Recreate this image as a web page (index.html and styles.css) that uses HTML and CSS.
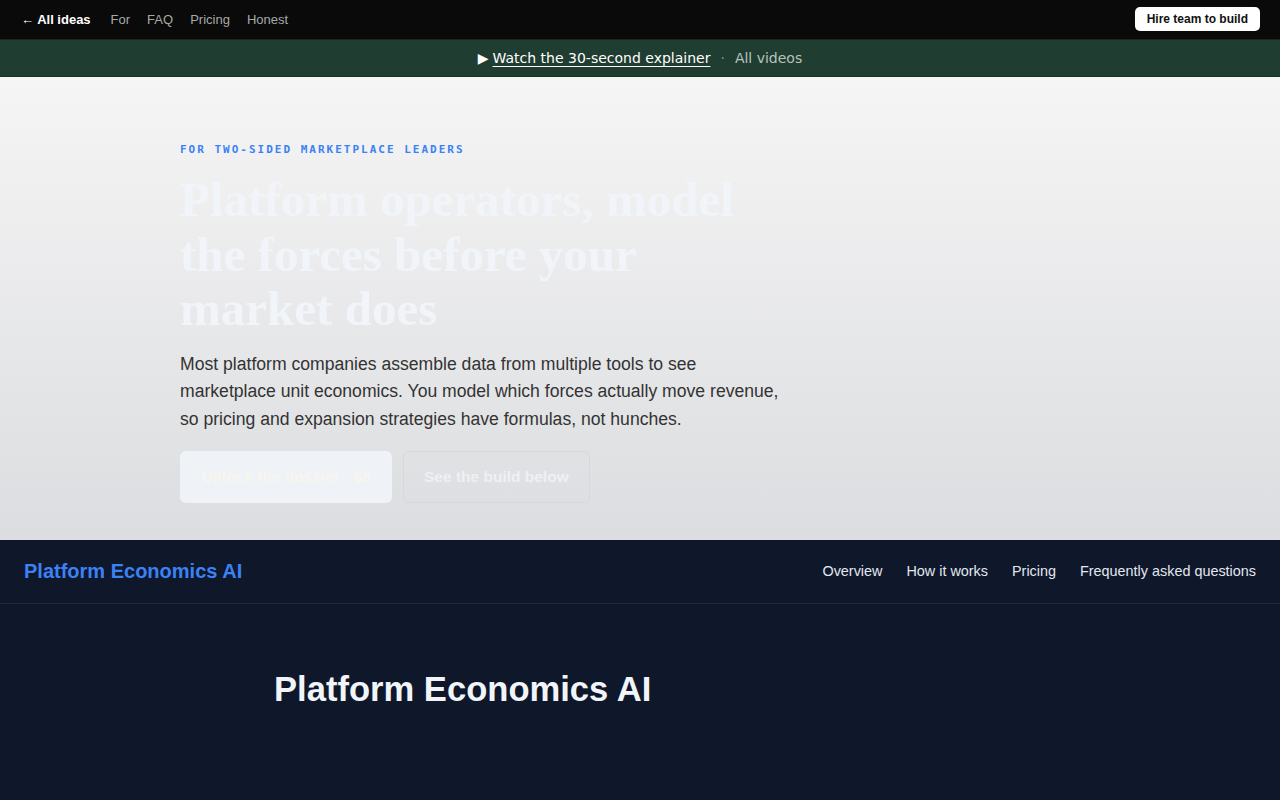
FILE: index.html
```html
<!DOCTYPE html>
<html lang="en">
<head>
  <meta charset="UTF-8" />
  <meta name="viewport" content="width=device-width, initial-scale=1.0"/>
  <title>Platform Economics AI</title>
  <link rel="stylesheet" href="styles.css">
</head>
<body>

  <nav class="topbar">
    <div class="topbar-links">
      <a class="back" href="#">← All ideas</a>
      <a href="#">For</a>
      <a href="#">FAQ</a>
      <a href="#">Pricing</a>
      <a href="#">Honest</a>
    </div>
    <a class="hire" href="#">Hire team to build</a>
  </nav>

  <div class="video-banner">
    <span class="play">▶</span> <a href="#">Watch the 30-second explainer</a>
    <span class="dot">·</span>
    <span class="all-videos">All videos</span>
  </div>

  <section class="hero">
    <div class="hero-inner">
      <div class="eyebrow">FOR TWO-SIDED MARKETPLACE LEADERS</div>
      <h1>Platform operators, model the forces before your market does</h1>
      <p class="lead">Most platform companies assemble data from multiple tools to see marketplace unit economics. You model which forces actually move revenue, so pricing and expansion strategies have formulas, not hunches.</p>
      <div class="hero-actions">
        <a class="btn btn-primary" href="#">Unlock the dossier · $5</a>
        <a class="btn btn-ghost" href="#">See the build below</a>
      </div>
    </div>
  </section>

  <section class="product">
    <header class="product-header">
      <div class="product-brand">Platform Economics AI</div>
      <nav class="product-nav">
        <a href="#">Overview</a>
        <a href="#">How it works</a>
        <a href="#">Pricing</a>
        <a href="#">Frequently asked questions</a>
      </nav>
    </header>
    <div class="product-body">
      <h2>Platform Economics AI</h2>
    </div>
  </section>

</body>
</html>
```

FILE: styles.css
```css
* {
  box-sizing: border-box;
}

body {
  margin: 0;
  padding: 0;
  font-family: 'Liberation Sans', Arial, sans-serif;
  background-color: #0f172a;
}

a {
  text-decoration: none;
  color: inherit;
}

/* top bar */
.topbar {
  height: 40px;
  background-color: #0a0a0a;
  border-bottom: 1px solid #222;
  display: flex;
  align-items: center;
  justify-content: space-between;
  padding: 0 20px 1px 21px;
}

.topbar-links {
  display: flex;
  align-items: center;
  gap: 17px;
  font-size: 13px;
  color: #a8a8a8;
}

.topbar-links .back {
  color: #ffffff;
  font-weight: bold;
  margin-right: 3px;
}

.hire {
  background-color: #ffffff;
  color: #111;
  font-size: 12px;
  font-weight: bold;
  padding: 5px 12px;
  border-radius: 5px;
  line-height: 14px;
}

/* explainer banner */
.video-banner {
  height: 37px;
  background-color: #1f3d30;
  border-bottom: 1px solid #173126;
  display: flex;
  align-items: center;
  justify-content: center;
  gap: 4px;
  font-family: 'DejaVu Sans', sans-serif;
  font-size: 14px;
  color: #ffffff;
}

.video-banner a {
  text-decoration: underline;
  text-underline-offset: 3px;
}

.video-banner .dot {
  color: #8a9a92;
  margin: 0 6px;
}

.video-banner .all-videos {
  color: #b8c2bd;
}

/* hero */
.hero {
  height: 463px;
  background: linear-gradient(180deg, #f5f5f5 0%, #dcdde0 100%);
  padding: 66px 180px 0;
}

.hero-inner {
  max-width: 620px;
}

.eyebrow {
  font-family: 'DejaVu Sans Mono', monospace;
  font-weight: bold;
  font-size: 11px;
  letter-spacing: 2px;
  color: #3b82f6;
}

.hero h1 {
  font-family: 'Liberation Serif', 'Times New Roman', serif;
  font-size: 49px;
  line-height: 54.5px;
  font-weight: bold;
  color: #f1f4f8;
  margin: 17px 0 14px;
  max-width: 580px;
}

.lead {
  font-size: 17.6px;
  line-height: 27.5px;
  color: #333;
  margin: 0;
  max-width: 600px;
}

.hero-actions {
  display: flex;
  gap: 11px;
  margin-top: 18px;
}

.btn {
  height: 52px;
  display: flex;
  align-items: center;
  justify-content: center;
  padding: 0 20px;
  font-size: 15.5px;
  font-weight: bold;
  border-radius: 6px;
  white-space: nowrap;
}

.btn-primary {
  background-color: #eff2f7;
  color: #f7f6ee;
  width: 212px;
}

.btn-ghost {
  border: 1px solid #d6d8dc;
  color: #eef0f5;
}

/* product section */
.product-header {
  height: 64px;
  border-bottom: 1px solid #1e293b;
  display: flex;
  align-items: center;
  justify-content: space-between;
  padding: 0 24px 1px;
}

.product-brand {
  color: #3b82f6;
  font-size: 20px;
  font-weight: bold;
}

.product-nav {
  display: flex;
  gap: 24px;
  font-size: 14.4px;
  color: #e2e8f0;
}

.product-body {
  padding: 66px 274px;
}

.product-body h2 {
  margin: 0;
  color: #f1f5f9;
  font-size: 34.6px;
  font-weight: bold;
}
```
